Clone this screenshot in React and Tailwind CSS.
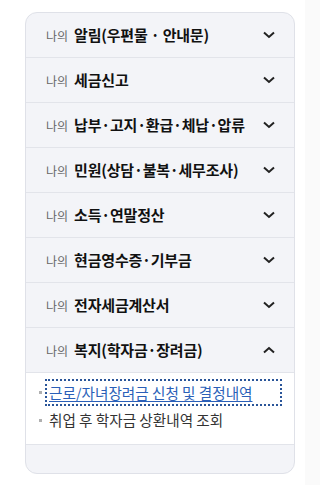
import React from "react";

const items = [
  "알림(우편물 · 안내문)",
  "세금신고",
  "납부·고지·환급·체납·압류",
  "민원(상담·불복·세무조사)",
  "소득·연말정산",
  "현금영수증·기부금",
  "전자세금계산서",
];

function Chevron({ up }) {
  return (
    <svg width="12" height="8" viewBox="0 0 12 8" className="shrink-0">
      <path
        d={up ? "M1 6.5 L6 2 L11 6.5" : "M1 1.5 L6 6 L11 1.5"}
        fill="none"
        stroke="#222"
        strokeWidth="2"
      />
    </svg>
  );
}

function Row({ title, up }) {
  return (
    <div className="flex h-[45px] items-center justify-between border-b border-[#e2e4ea] pl-[20px] pr-[19px]">
      <div className="flex items-baseline gap-[6px]">
        <span className="text-[12px] text-[#666]">나의</span>
        <span className="text-[15px] font-bold text-[#111] tracking-[-0.2px]">{title}</span>
      </div>
      <Chevron up={up} />
    </div>
  );
}

export default function App() {
  return (
    <div
      className="relative h-[485px] w-[320px] bg-white"
      style={{ fontFamily: '"Noto Sans CJK KR", "Noto Sans", sans-serif' }}
    >
      <div className="absolute right-0 top-0 h-full w-[15px] bg-[#fafafa]" />
      <div className="pl-[25px] pt-[12px]">
        <div className="w-[270px] overflow-hidden rounded-[12px] border border-[#dfe1e8] bg-[#f3f4f8]">
          {items.map((t) => (
            <Row key={t} title={t} />
          ))}
          <Row title="복지(학자금·장려금)" up />
          <div className="border-b border-[#e2e4ea] bg-white pb-[10px] pl-[13px] pt-[6px]">
            <div className="flex items-center gap-[3px]">
              <span className="h-[3px] w-[3px] shrink-0 bg-[#b0b0b0]" />
              <span className="flex h-[27px] w-[237px] items-center border-2 border-dotted border-[#2a5599] pl-[2px]">
                <span className="text-[14.6px] leading-[20px] text-[#2a5fb8] underline underline-offset-2">
                  근로/자녀장려금 신청 및 결정내역
                </span>
              </span>
            </div>
            <div className="flex h-[28px] items-center gap-[3px]">
              <span className="h-[3px] w-[3px] shrink-0 bg-[#b0b0b0]" />
              <span className="pl-[4px] text-[14.6px] leading-[20px] text-[#333]">
                취업 후 학자금 상환내역 조회
              </span>
            </div>
          </div>
          <div className="h-[28px]" />
        </div>
      </div>
    </div>
  );
}
